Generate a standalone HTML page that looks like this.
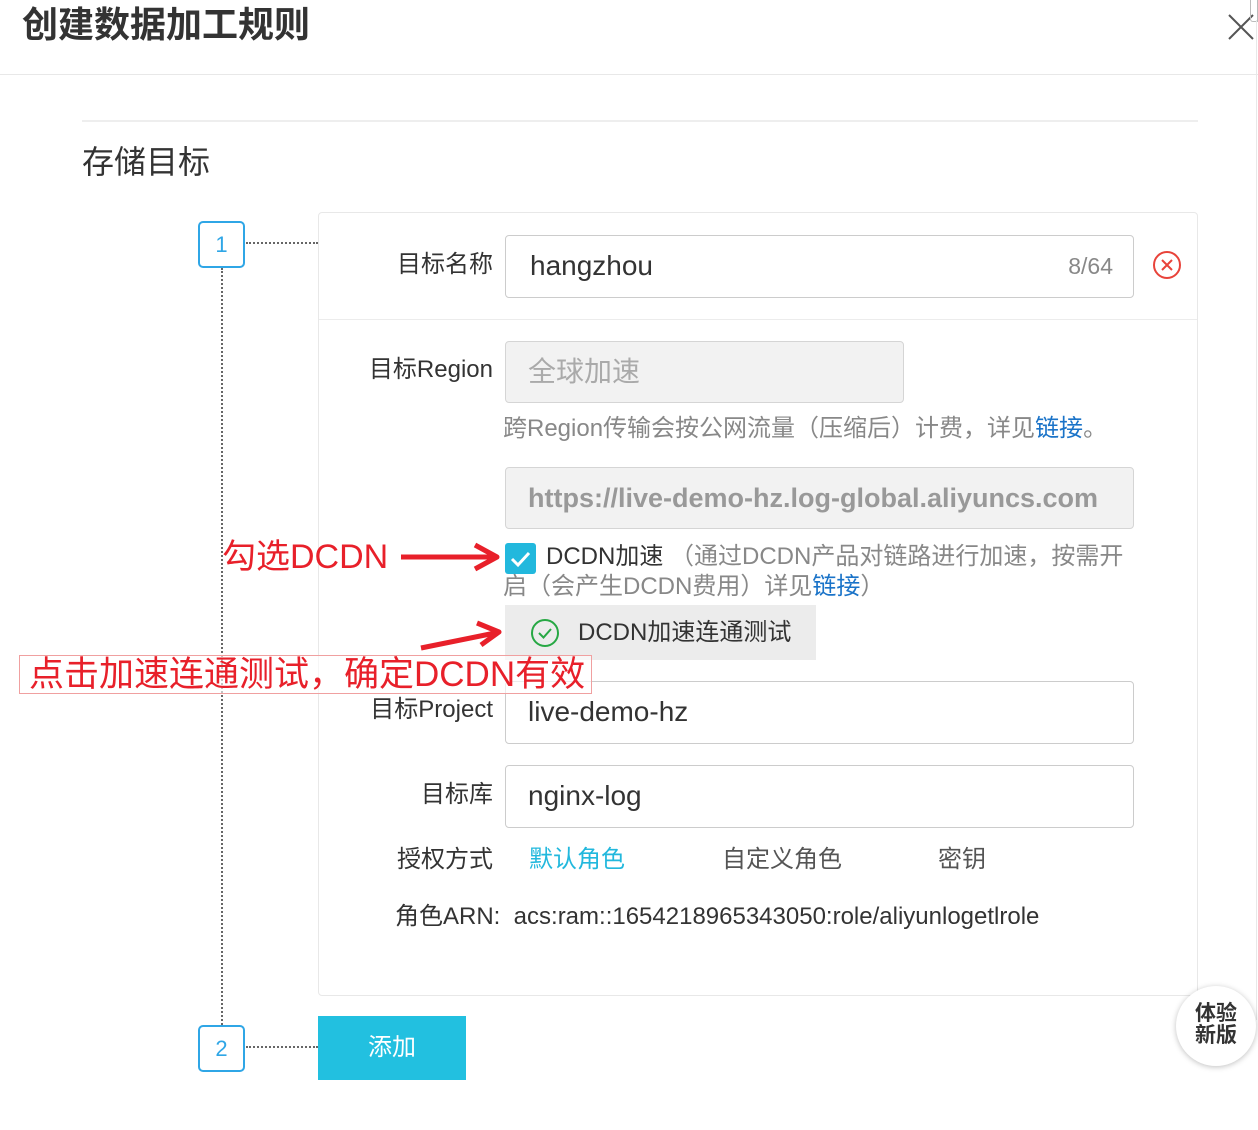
<!DOCTYPE html>
<html><head><meta charset="utf-8"><style>
*{margin:0;padding:0;box-sizing:border-box}
body{width:1258px;height:1130px;background:#fff;position:relative;overflow:hidden;font-family:"Liberation Sans","Noto Sans CJK SC",sans-serif;color:#333}
.a{position:absolute;white-space:nowrap}
.inp{position:absolute;border:1px solid #ccc;border-radius:4px;background:#fff;font-size:28px;line-height:60px;padding-left:22px;color:#333}
.lbl{position:absolute;font-size:24px;color:#333;text-align:right;width:220px;left:273px;line-height:30px}
.step{position:absolute;left:198px;width:47px;height:47px;border:2px solid #2fa6e6;border-radius:5px;color:#2fa6e6;font-size:22px;text-align:center;line-height:43px}
.red{color:#e8202a}
</style></head><body>
<div class="a" style="left:22px;top:3px;font-size:36px;font-weight:bold;color:#333;line-height:44px">创建数据加工规则</div>
<svg class="a" style="left:1226px;top:12px" width="30" height="30"><path d="M3 3L27 27M27 3L3 27" stroke="#555" stroke-width="2"/></svg>
<div class="a" style="left:1250px;top:0;width:8px;height:22px;border:1px solid #bbb;border-top:none;border-radius:0 0 0 3px"></div>
<div class="a" style="left:1256px;top:20px;width:1px;height:1000px;background:#e8e8e8"></div>
<div class="a" style="left:0;top:74px;width:1258px;height:1px;background:#e8e8e8"></div>
<div class="a" style="left:82px;top:120px;width:1116px;height:2px;background:#eee"></div>
<div class="a" style="left:82px;top:142px;font-size:32px;line-height:40px;color:#333">存储目标</div>

<div class="step" style="top:221px">1</div>
<div class="a" style="left:246px;top:242px;width:72px;border-top:2px dotted #666"></div>
<div class="a" style="left:221px;top:268px;height:757px;border-left:2px dotted #666"></div>
<div class="step" style="top:1025px">2</div>
<div class="a" style="left:246px;top:1046px;width:72px;border-top:2px dotted #666"></div>

<div class="a" style="left:318px;top:212px;width:880px;height:784px;border:1px solid #e8e8e8;border-radius:4px"></div>
<div class="a" style="left:319px;top:319px;width:878px;height:1px;background:#ececec"></div>

<div class="lbl" style="top:250px">目标名称</div>
<div class="inp" style="left:505px;top:235px;width:629px;height:63px;padding-left:24px">hangzhou<span style="position:absolute;right:20px;color:#888;font-size:23px">8/64</span></div>
<svg class="a" style="left:1152px;top:250px" width="30" height="30"><circle cx="15" cy="15" r="13" fill="none" stroke="#e8433a" stroke-width="2"/><path d="M10 10L20 20M20 10L10 20" stroke="#e8433a" stroke-width="2"/></svg>

<div class="lbl" style="top:355px">目标Region</div>
<div class="inp" style="left:505px;top:341px;width:399px;height:62px;background:#f2f2f2;color:#aaa;border-color:#d5d5d5">全球加速</div>
<div class="a" style="left:503px;top:414px;font-size:24px;color:#888;line-height:30px">跨Region传输会按公网流量（压缩后）计费，详见<span style="color:#1a73c8">链接</span>。</div>
<div class="inp" style="left:505px;top:467px;width:629px;height:62px;background:#f2f2f2;color:#999;border-color:#d5d5d5;font-weight:bold;font-size:27px">https://live-demo-hz.log-global.aliyuncs.com</div>

<div class="a" style="left:505px;top:543px;width:31px;height:31px;background:#22b8dd;border-radius:3px"></div>
<svg class="a" style="left:505px;top:543px" width="31" height="31"><path d="M7 16L13 22L24 10" stroke="#fff" stroke-width="3" fill="none"/></svg>
<div class="a" style="left:546px;top:542px;font-size:24px;line-height:30px;color:#333">DCDN加速 <span style="color:#888">（通过DCDN产品对链路进行加速，按需开</span></div>
<div class="a" style="left:503px;top:572px;font-size:24px;line-height:30px;color:#888">启（会产生DCDN费用）详见<span style="color:#1a73c8">链接</span>）</div>
<div class="a" style="left:505px;top:605px;width:311px;height:55px;background:#ececec"></div>
<svg class="a" style="left:530px;top:618px" width="30" height="30"><circle cx="15" cy="15" r="13" fill="none" stroke="#27a844" stroke-width="2"/><path d="M9 15L13.5 19.5L21 11" stroke="#27a844" stroke-width="2" fill="none"/></svg>
<div class="a" style="left:578px;top:618px;font-size:24px;line-height:30px;color:#333">DCDN加速连通测试</div>

<div class="lbl" style="top:695px">目标Project</div>
<div class="inp" style="left:505px;top:681px;width:629px;height:63px">live-demo-hz</div>
<div class="lbl" style="top:780px">目标库</div>
<div class="inp" style="left:505px;top:765px;width:629px;height:63px">nginx-log</div>
<div class="lbl" style="top:845px">授权方式</div>
<div class="a" style="left:529px;top:845px;font-size:24px;line-height:30px;color:#22b8dd">默认角色</div>
<div class="a" style="left:722px;top:845px;font-size:24px;line-height:30px;color:#555">自定义角色</div>
<div class="a" style="left:938px;top:845px;font-size:24px;line-height:30px;color:#555">密钥</div>
<div class="a" style="left:395px;top:902px;font-size:24px;line-height:30px;color:#333">角色ARN:&nbsp; acs:ram::1654218965343050:role/aliyunlogetlrole</div>

<div class="a" style="left:318px;top:1016px;width:148px;height:64px;background:#22c0e0;color:#fff;font-size:24px;text-align:center;line-height:64px">添加</div>

<div class="a" style="left:1176px;top:986px;width:80px;height:80px;border-radius:50%;background:#fff;box-shadow:0 1px 6px rgba(0,0,0,.25);font-size:21px;font-weight:bold;line-height:22px;text-align:center;padding-top:17px;white-space:normal;color:#333">体验<br>新版</div>

<div class="a red" style="left:222px;top:537px;font-size:34px;line-height:40px">勾选DCDN</div>
<svg class="a" style="left:395px;top:535px" width="120" height="120"><path d="M6 22L98 22" stroke="#e8202a" stroke-width="5"/><path d="M80 10L102 22L80 34" stroke="#e8202a" stroke-width="5" fill="none" stroke-linejoin="round"/><path d="M26 113L100 98" stroke="#e8202a" stroke-width="5"/><path d="M82 88L104 97L86 110" stroke="#e8202a" stroke-width="5" fill="none" stroke-linejoin="round"/></svg>
<div class="a red" style="left:19px;top:655px;width:573px;height:39px;border:1px solid #f0a0a0;font-size:35px;line-height:38px;padding-left:9px;background:rgba(255,255,255,.6)">点击加速连通测试，确定DCDN有效</div>
</body></html>
